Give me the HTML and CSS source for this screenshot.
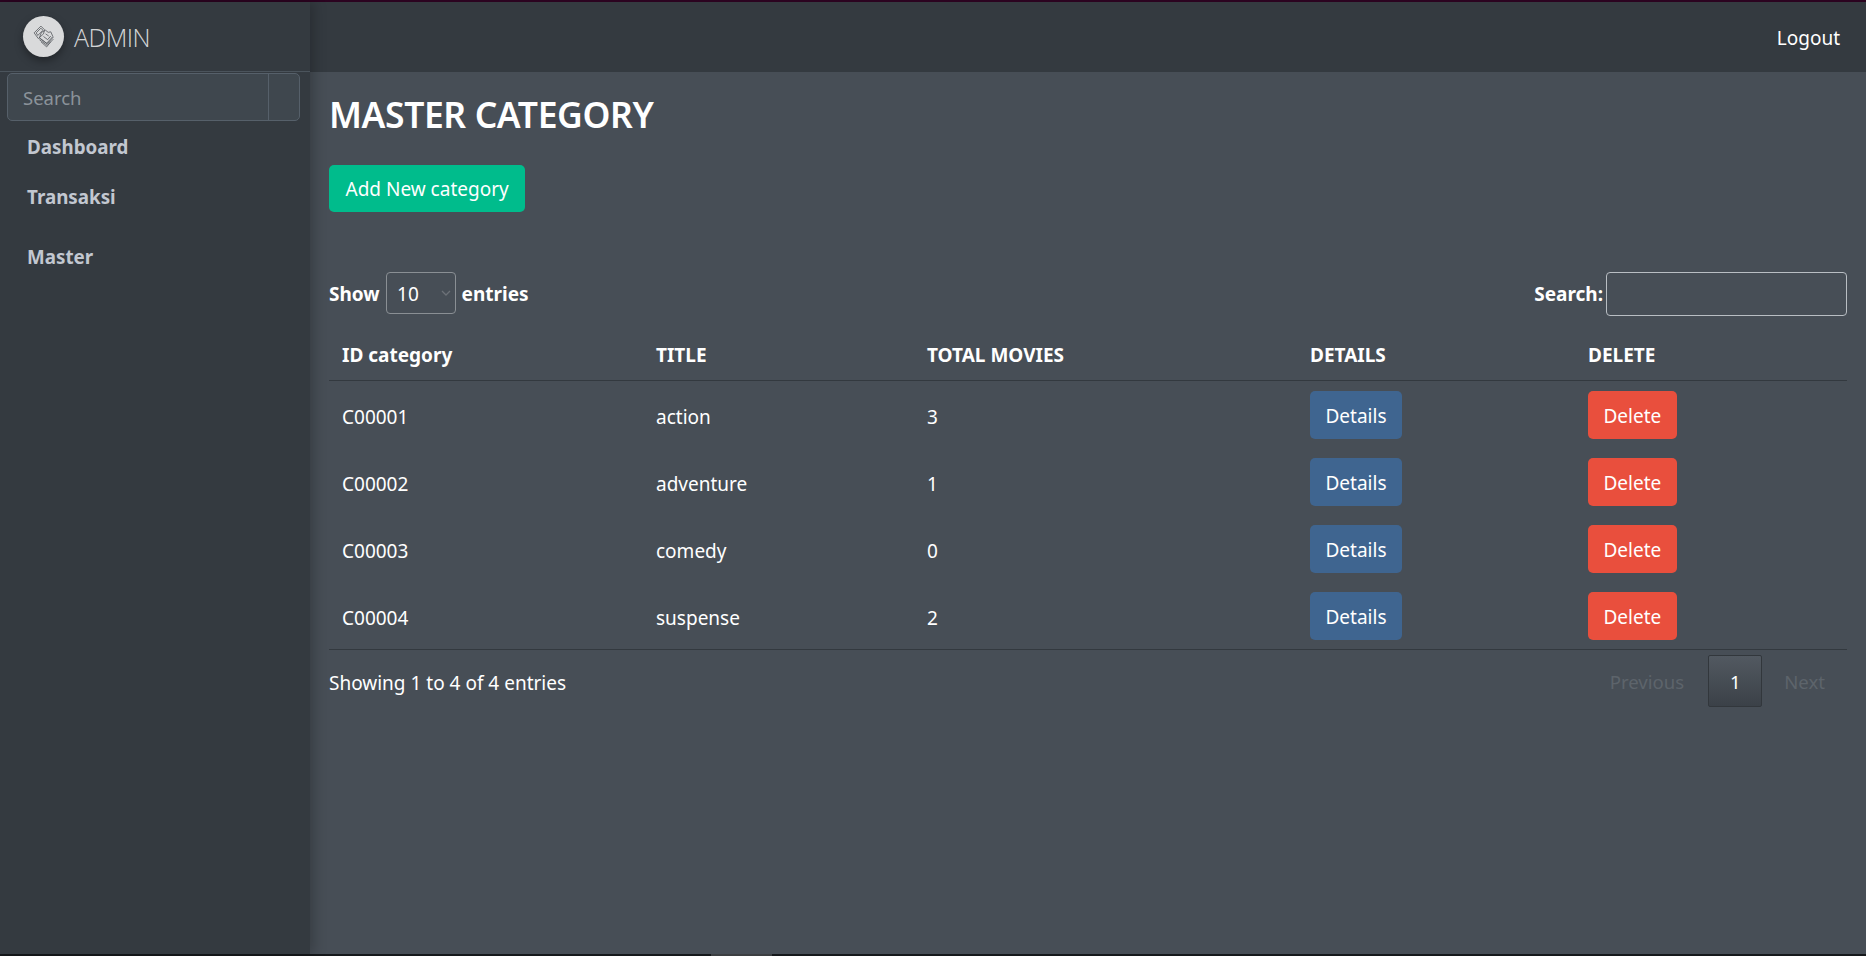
FILE: index.html
```html
<!DOCTYPE html>
<html lang="en">
<head>
<meta charset="utf-8">
<title>Master Category</title>
<link rel="stylesheet" href="styles.css">
</head>
<body>
<div class="stripe-top"></div>
<div class="shell">
  <aside class="sidebar">
    <div class="brand">
      <span class="brand-logo">
        <svg viewBox="0 0 24 24" width="25" height="25" fill="none" stroke="#5a5e63" stroke-width="0.8" stroke-linejoin="round">
          <path d="M3 8.500 9.500 2l3.500 3.500-1 4-5 4.500z"/>
          <path d="M5 8.500 9.500 4l2 2-5 5z"/>
          <path d="M10 8l4-2 2.500 2 2.500-.5 2 4.500-6 6.500-7-5z"/>
          <path d="M8.500 13.500l7 5.500 6-6.500"/>
          <path d="M8 15l7.500 5.500 6-6M9.500 17l5.500 5 4-5"/>
          <path d="M12 12l4 3 3-3.500M14 9.500l3 2" />
        </svg>
      </span>
      <span class="brand-text">ADMIN</span>
    </div>
    <div class="side-search">
      <span class="side-search-input">Search</span>
      <span class="side-search-btn"></span>
    </div>
    <nav class="side-nav">
      <a class="side-link">Dashboard</a>
      <a class="side-link">Transaksi</a>
      <a class="side-link side-link-gap">Master</a>
    </nav>
  </aside>
  <div class="main">
    <header class="topbar"><a class="logout">Logout</a></header>
    <section class="content">
      <h1 class="title">MASTER CATEGORY</h1>
      <a class="btn btn-add">Add New category</a>
      <div class="dt-top">
        <div class="dt-length">
          <b>Show</b>
          <span class="select"><span class="select-value">10</span>
            <svg class="chev" viewBox="0 0 10 6" width="10" height="6" fill="none" stroke="#6c7177" stroke-width="1.300"><path d="M1 1l4 4 4-4"/></svg>
          </span>
          <b>entries</b>
        </div>
        <div class="dt-search"><b>Search:</b><span class="search-input"></span></div>
      </div>
      <table class="table">
        <colgroup>
          <col class="c1"><col class="c2"><col class="c3"><col class="c4"><col class="c5">
        </colgroup>
        <thead>
          <tr><th>ID category</th><th>TITLE</th><th>TOTAL MOVIES</th><th>DETAILS</th><th>DELETE</th></tr>
        </thead>
        <tbody>
          <tr><td>C00001</td><td>action</td><td>3</td><td class="act"><a class="btn btn-details">Details</a></td><td class="act"><a class="btn btn-delete">Delete</a></td></tr>
          <tr><td>C00002</td><td>adventure</td><td>1</td><td class="act"><a class="btn btn-details">Details</a></td><td class="act"><a class="btn btn-delete">Delete</a></td></tr>
          <tr><td>C00003</td><td>comedy</td><td>0</td><td class="act"><a class="btn btn-details">Details</a></td><td class="act"><a class="btn btn-delete">Delete</a></td></tr>
          <tr><td>C00004</td><td>suspense</td><td>2</td><td class="act"><a class="btn btn-details">Details</a></td><td class="act"><a class="btn btn-delete">Delete</a></td></tr>
        </tbody>
      </table>
      <div class="dt-bottom">
        <div class="dt-info">Showing 1 to 4 of 4 entries</div>
        <div class="pager">
          <span class="page-off page-prev">Previous</span>
          <span class="page-on">1</span>
          <span class="page-off">Next</span>
        </div>
      </div>
    </section>
  </div>
</div>
<div class="stripe-bottom"><span class="stripe-tab"></span></div>
</body>
</html>
```
FILE: styles.css
```css
* { box-sizing: border-box; }
html, body { height: 100%; }
body {
  margin: 0;
  display: flex;
  flex-direction: column;
  overflow: hidden;
  background: #474e56;
  color: #fff;
  font-family: "Noto Sans", "Open Sans", "Liberation Sans", sans-serif;
  font-size: 19px;
}
.stripe-top { height: 2px; background: #2b0320; flex: none; }
.stripe-bottom { height: 2px; background: #15181b; flex: none; padding-left: 711px; }
.stripe-tab { display: block; width: 61px; height: 2px; background: #3c3f42; }
.shell { flex: 1; display: flex; min-height: 0; }

.sidebar {
  width: 310px;
  flex: none;
  position: relative;
  z-index: 1;
  background: #343a40;
  box-shadow: 4px 0 12px rgba(0,0,0,.22);
}
.brand {
  height: 70px;
  display: flex;
  align-items: center;
  gap: 10px;
  padding: 0 0 1px 23px;
  border-bottom: 1px solid #4b545c;
}
.brand-logo {
  width: 41px; height: 41px;
  border-radius: 50%;
  background: #d9dadb;
  box-shadow: 0 4px 9px rgba(0,0,0,.35);
  display: flex; align-items: center; justify-content: center;
}
.brand-text { font-size: 25px; line-height: 34px; padding-top: 2px; font-weight: 300; color: rgba(255,255,255,.8); font-family: "Open Sans", "Noto Sans", sans-serif; letter-spacing: -.5px; }
.side-search {
  display: flex;
  margin: 1px 10px 0 7px;
  height: 48px;
  border: 1px solid #56606a;
  border-radius: 5px;
  background: #3f474e;
}
.side-search-input { flex: 1; padding: 11px 15px 9px; color: #8b939a; font-size: 18.500px; line-height: 26px; }
.side-search-btn { width: 31px; border-left: 1px solid #56606a; }
.side-nav { display: flex; flex-direction: column; padding: 0 0 0 27px; }
.side-link { font-weight: 700; color: #c2c7d0; font-size: 18.800px; line-height: 26px; padding-top: 13px; height: 50px; }
.side-link-gap { margin-top: 10px; }

.main { flex: 1; display: flex; flex-direction: column; min-width: 0; }
.topbar {
  height: 70px;
  flex: none;
  background: #343a40;
  display: flex;
  justify-content: flex-end;
  align-items: center;
  padding: 2px 26px 0 0;
}
.logout { font-size: 19px; }
.content { flex: 1; padding: 0 19px 0 19px; background: #474e56; }
.title {
  margin: 19px 0 0;
  font-size: 35.500px;
  line-height: 46px;
  font-weight: 600;
  letter-spacing: -.4px;
}
.btn {
  display: inline-block;
  height: 47px;
  line-height: 49px;
  padding: 0 16px;
  border-radius: 5px;
  font-size: 19px;
  color: #fff;
}
.btn-add { background: #00bc8c; margin-top: 28px; padding: 0 16.500px; }
.btn-details { background: #3f6590; height: 48px; line-height: 51px; padding: 0 15.500px; }
.btn-delete { background: #e94f3d; height: 48px; line-height: 51px; padding: 0 15.500px; }

.dt-top {
  margin-top: 60px;
  display: flex;
  justify-content: space-between;
  align-items: center;
  height: 43px;
}
.dt-length { display: flex; align-items: center; gap: 5.500px; }
.select {
  width: 70px; height: 42px;
  margin: 0 0 1px 1px;
  border: 1px solid #8a8f94;
  border-radius: 4px;
  display: flex;
  align-items: center;
  justify-content: space-between;
  padding: 0 3px 0 10px;
  font-size: 19px;
}
.select-value { padding-top: 2px; }
.chev { margin-right: 1px; }
.dt-search { display: flex; align-items: center; gap: 3px; }
.search-input { width: 241px; height: 44px; border: 1px solid #b9bec3; border-radius: 4px; }

.table { width: 100%; border-collapse: collapse; table-layout: fixed; margin-top: 14px; }
.c1 { width: 314px; } .c2 { width: 271px; } .c3 { width: 383px; } .c4 { width: 278px; } .c5 { width: 272px; }
.table th {
  text-align: left;
  padding: 2px 13px 0;
  height: 51px;
  font-weight: 700;
  border-bottom: 1px solid #33393f;
}
.table td { padding: 6px 13px 0; height: 67px; font-size: 19px; }
.table td.act { padding-top: 3px; }
.table tbody tr:last-child td { border-bottom: 1px solid #33393f; height: 68px; }

.dt-bottom { display: flex; justify-content: space-between; align-items: flex-start; padding-top: 5px; }
.dt-info { line-height: 52px; font-size: 19px; padding-top: 2px; }
.pager { display: flex; height: 52px; align-items: center; font-size: 18.600px; }
.page-off { color: #5d646b; padding: 2px 22px 0; }
.page-prev { padding-right: 24px; }
.page-on {
  width: 54px; height: 52px;
  padding-top: 2px;
  display: flex; align-items: center; justify-content: center;
  border: 1px solid #32373c;
  border-radius: 2px;
  background: linear-gradient(#525961, #3b4148);
}
```
